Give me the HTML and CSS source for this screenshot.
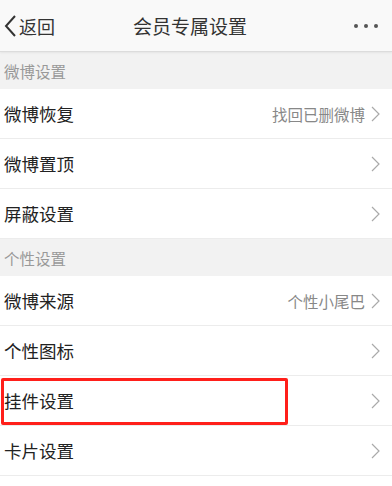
FILE: index.html
```html
<!DOCTYPE html>
<html lang="zh-CN">
<head>
<meta charset="utf-8">
<link rel="stylesheet" href="styles.css">
</head>
<body>
<div class="page">
  <header class="nav">
    <div class="back">
      <svg class="back-icon" width="14" height="24" viewBox="0 0 14 24"><path d="M12 2 L3 12 L12 22" fill="none" stroke="#333" stroke-width="2"/></svg>
      <span>返回</span>
    </div>
    <div class="title">会员专属设置</div>
    <div class="more"><i></i><i></i><i></i></div>
  </header>

  <div class="section">微博设置</div>
  <div class="row"><span class="label">微博恢复</span><span class="right"><span class="value">找回已删微博</span><svg class="chev" width="9" height="16" viewBox="0 0 9 16"><path d="M1 1 L8 8 L1 15" fill="none" stroke="#aaa" stroke-width="1.2"/></svg></span></div>
  <div class="row"><span class="label">微博置顶</span><span class="right"><svg class="chev" width="9" height="16" viewBox="0 0 9 16"><path d="M1 1 L8 8 L1 15" fill="none" stroke="#aaa" stroke-width="1.2"/></svg></span></div>
  <div class="row"><span class="label">屏蔽设置</span><span class="right"><svg class="chev" width="9" height="16" viewBox="0 0 9 16"><path d="M1 1 L8 8 L1 15" fill="none" stroke="#aaa" stroke-width="1.2"/></svg></span></div>

  <div class="section">个性设置</div>
  <div class="row"><span class="label">微博来源</span><span class="right"><span class="value">个性小尾巴</span><svg class="chev" width="9" height="16" viewBox="0 0 9 16"><path d="M1 1 L8 8 L1 15" fill="none" stroke="#aaa" stroke-width="1.2"/></svg></span></div>
  <div class="row"><span class="label">个性图标</span><span class="right"><svg class="chev" width="9" height="16" viewBox="0 0 9 16"><path d="M1 1 L8 8 L1 15" fill="none" stroke="#aaa" stroke-width="1.2"/></svg></span></div>
  <div class="row"><span class="label">挂件设置</span><span class="right"><svg class="chev" width="9" height="16" viewBox="0 0 9 16"><path d="M1 1 L8 8 L1 15" fill="none" stroke="#aaa" stroke-width="1.2"/></svg></span><span class="mark"></span></div>
  <div class="row"><span class="label">卡片设置</span><span class="right"><svg class="chev" width="9" height="16" viewBox="0 0 9 16"><path d="M1 1 L8 8 L1 15" fill="none" stroke="#aaa" stroke-width="1.2"/></svg></span></div>
</div>
</body>
</html>
```
FILE: styles.css
```css
* { box-sizing: border-box; }
html, body { margin: 0; padding: 0; background: #fff; }
body { font-family: "Noto Sans CJK SC", "Noto Sans", sans-serif; width: 392px; height: 486px; overflow: hidden; }
.page { width: 392px; }
.nav {
  height: 52px;
  background: #f9f9f9;
  border-bottom: 1px solid #dcdcdc;
  box-shadow: 0 1px 2px rgba(0,0,0,0.06);
  display: flex;
  align-items: center;
  position: relative;
}
.back { display: flex; align-items: center; padding-left: 3px; font-size: 18px; color: #333; width: 120px; }
.back-icon { margin-right: 2px; margin-top: 1px; }
.title { flex: 1; text-align: center; font-size: 19px; color: #333; margin-left: -12px; }
.more { width: 120px; display: flex; justify-content: flex-end; gap: 6px; padding-right: 14px; }
.more i { display: block; width: 4px; height: 4px; border-radius: 50%; background: #555; }
.section {
  height: 37px;
  background: #f2f2f2;
  color: #999;
  font-size: 15.5px;
  padding-left: 4px;
  display: flex;
  align-items: center;
}
.row {
  height: 50px;
  border-bottom: 1px solid #ececec;
  display: flex;
  align-items: center;
  justify-content: space-between;
  padding-left: 4px;
  padding-right: 12px;
  position: relative;
}
.label { font-size: 17.5px; color: #222; }
.right { display: flex; align-items: center; }
.value { font-size: 15.5px; color: #888; margin-right: 6px; }
.chev { display: block; }
.mark {
  position: absolute;
  left: 1px;
  top: 2px;
  width: 287px;
  height: 47px;
  border: 3px solid #ff1f1a;
  border-radius: 2px;
}
```
